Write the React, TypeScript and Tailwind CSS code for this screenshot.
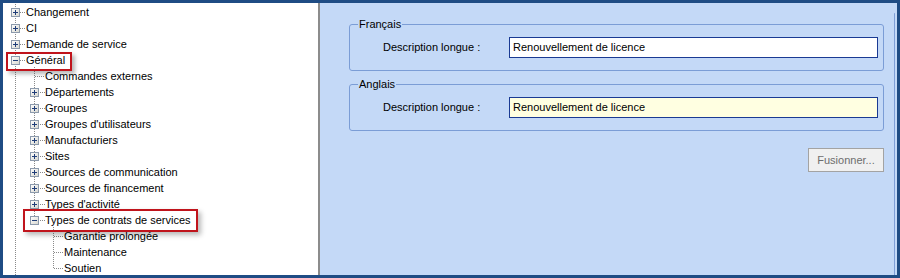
type Row = { label: string; level: number; box?: 'plus' | 'minus' }

const rows: Row[] = [
  { label: 'Changement', level: 0, box: 'plus' },
  { label: 'CI', level: 0, box: 'plus' },
  { label: 'Demande de service', level: 0, box: 'plus' },
  { label: 'Général', level: 0, box: 'minus' },
  { label: 'Commandes externes', level: 1 },
  { label: 'Départements', level: 1, box: 'plus' },
  { label: 'Groupes', level: 1, box: 'plus' },
  { label: "Groupes d'utilisateurs", level: 1, box: 'plus' },
  { label: 'Manufacturiers', level: 1, box: 'plus' },
  { label: 'Sites', level: 1, box: 'plus' },
  { label: 'Sources de communication', level: 1, box: 'plus' },
  { label: 'Sources de financement', level: 1, box: 'plus' },
  { label: "Types d'activité", level: 1, box: 'plus' },
  { label: 'Types de contrats de services', level: 1, box: 'minus' },
  { label: 'Garantie prolongée', level: 2 },
  { label: 'Maintenance', level: 2 },
  { label: 'Soutien', level: 2 },
]

const indent = ['pl-[8px]', 'pl-[27px]', 'pl-[46px]']

function ExpandBox({ kind }: { kind: 'plus' | 'minus' }) {
  return (
    <svg width="9" height="9" viewBox="0 0 9 9" className="block shrink-0">
      <defs>
        <linearGradient id="bx" x1="0" y1="0" x2="1" y2="1">
          <stop offset="0" stopColor="#ffffff" />
          <stop offset="1" stopColor="#d6d6ce" />
        </linearGradient>
      </defs>
      <rect x="0.5" y="0.5" width="8" height="8" fill="url(#bx)" stroke="#8c9aac" />
      <line x1="2" y1="4.5" x2="7" y2="4.5" stroke="#1f3d78" />
      {kind === 'plus' && <line x1="4.5" y1="2" x2="4.5" y2="7" stroke="#1f3d78" />}
    </svg>
  )
}

function TreeLines() {
  const c = (i: number) => 9 + 16 * i + 0.5
  const hl = (x1: number, x2: number, i: number) => (
    <line key={`${x1}-${i}`} x1={x1} y1={c(i)} x2={x2} y2={c(i)} />
  )
  return (
    <svg className="absolute inset-0" width="315" height="272">
      <g stroke="#8a8a8a" strokeDasharray="1 1" shapeRendering="crispEdges">
        <line x1="12.5" y1="1" x2="12.5" y2="272" />
        <line x1="31.5" y1="62" x2="31.5" y2={c(13)} />
        <line x1="50.5" y1="222" x2="50.5" y2={c(16)} />
        {[0, 1, 2, 3].map((i) => hl(17, 23, i))}
        {hl(32, 42, 4)}
        {[5, 6, 7, 8, 9, 10, 11, 12, 13].map((i) => hl(37, 42, i))}
        {[14, 15, 16].map((i) => hl(51, 61, i))}
      </g>
    </svg>
  )
}

function TreePanel() {
  return (
    <div className="relative w-[317px] shrink-0 overflow-hidden border-r-2 border-[#8c8c8c] bg-white pt-[1px]">
      <TreeLines />
      {rows.map((row) => (
        <div key={row.label} className={`relative flex h-[16px] items-center ${indent[row.level]}`}>
          <span className="flex h-[9px] w-[9px] shrink-0">{row.box && <ExpandBox kind={row.box} />}</span>
          <span className="ml-[6px] whitespace-nowrap bg-white pr-[1px] text-[11px] leading-[13px] text-black">
            {row.label}
          </span>
        </div>
      ))}
      <div className="absolute left-[3px] top-[49px] h-[19px] w-[66px] border-2 border-[#c0141c] shadow-[3px_3px_4px_rgba(0,0,0,0.28)]" />
      <div className="absolute left-[20px] top-[206px] h-[23px] w-[175px] border-2 border-[#c0141c] shadow-[3px_3px_5px_rgba(0,0,0,0.28)]" />
    </div>
  )
}

function LanguageGroup({ title, value, tinted }: { title: string; value: string; tinted?: boolean }) {
  return (
    <fieldset className="rounded-[3px] border border-[#7b9dd6] pb-[12px]">
      <legend className="ml-[8px] px-[1px] text-[11px] leading-[13px] text-black">{title}</legend>
      <div className="mt-[6px] flex items-center pl-[33px] pr-[5px]">
        <span className="w-[126px] shrink-0 text-[11px] text-black">Description longue :</span>
        <div
          className={`flex h-[21px] flex-1 items-center border border-[#1a3a93] px-[3px] text-[11px] text-black ${
            tinted ? 'bg-[#ffffe1]' : 'bg-white'
          }`}
        >
          {value}
        </div>
      </div>
    </fieldset>
  )
}

export default function App() {
  return (
    <div className="flex h-[278px] w-[900px] bg-[#1f4c84] p-[3px] font-['Liberation_Sans',Arial,sans-serif]">
      <TreePanel />
      <div className="flex flex-1 bg-[#c4d9f7]">
        <div className="flex flex-1 flex-col pl-[29px] pr-[10px] pt-[15px]">
          <LanguageGroup title="Français" value="Renouvellement de licence" />
          <div className="h-[7px]" />
          <LanguageGroup title="Anglais" value="Renouvellement de licence" tinted />
          <div className="mt-[17px] flex justify-end">
            <button className="h-[24px] w-[76px] border border-[#a3a3a3] bg-[#f0f0f0] text-[11px] text-[#6d6d6d]">
              Fusionner...
            </button>
          </div>
        </div>
        <div className="mt-[10px] w-[1px] rounded-t-[1px] bg-[#7e9ed6]" />
        <div className="w-[2px]" />
      </div>
    </div>
  )
}
